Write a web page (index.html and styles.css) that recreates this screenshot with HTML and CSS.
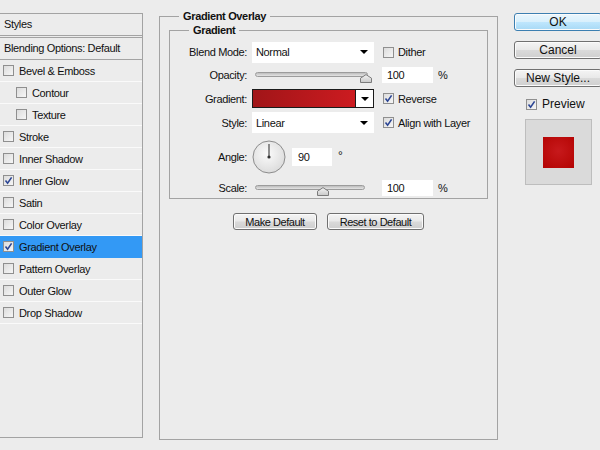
FILE: index.html
```html
<!DOCTYPE html>
<html>
<head>
<meta charset="utf-8">
<title>Layer Style - Gradient Overlay</title>
<link rel="stylesheet" href="styles.css">
</head>
<body>
<div class="dialog">
  <aside class="styles-panel">
    <div class="panel-head">Styles</div>
    <div class="panel-blend">Blending Options: Default</div>
    <ul class="fx-list">
      <li class="fx"><span class="cb"></span>Bevel &amp; Emboss</li>
      <li class="fx sub"><span class="cb"></span>Contour</li>
      <li class="fx sub"><span class="cb"></span>Texture</li>
      <li class="fx"><span class="cb"></span>Stroke</li>
      <li class="fx"><span class="cb"></span>Inner Shadow</li>
      <li class="fx"><span class="cb checked"><svg viewBox="0 0 11 11" width="11" height="11"><path d="M2.5 5.5 L4.6 8.2 L8.6 2.4" /></svg></span>Inner Glow</li>
      <li class="fx"><span class="cb"></span>Satin</li>
      <li class="fx"><span class="cb"></span>Color Overlay</li>
      <li class="fx selected"><span class="cb checked"><svg viewBox="0 0 11 11" width="11" height="11"><path d="M2.5 5.5 L4.6 8.2 L8.6 2.4" /></svg></span>Gradient Overlay</li>
      <li class="fx"><span class="cb"></span>Pattern Overlay</li>
      <li class="fx"><span class="cb"></span>Outer Glow</li>
      <li class="fx"><span class="cb"></span>Drop Shadow</li>
    </ul>
  </aside>

  <fieldset class="group outer">
    <legend>Gradient Overlay</legend>
    <fieldset class="group inner">
      <legend>Gradient</legend>
      <div class="grid">
        <label class="lbl">Blend Mode:</label>
        <div class="select"><span>Normal</span><i class="arrow"></i></div>
        <div class="opt"><span class="cb"></span>Dither</div>

        <label class="lbl">Opacity:</label>
        <div class="slider">
          <div class="track"></div>
          <svg class="thumb" style="left:105px" viewBox="0 0 12 9" width="12" height="9"><defs><linearGradient id="tg1" x1="0" y1="0" x2="0" y2="1"><stop offset="0" stop-color="#f4f4f4"/><stop offset="1" stop-color="#c9c9c9"/></linearGradient></defs><path d="M0.5 8.5 V4.2 L6 0.6 L11.5 4.2 V8.5 Z" fill="url(#tg1)" stroke="#7b7b7b"/></svg>
        </div>
        <div class="num-cell"><span class="num">100</span><span class="unit">%</span></div>

        <label class="lbl">Gradient:</label>
        <div class="swatch"><span class="ramp"></span><span class="swatch-btn"><i class="arrow"></i></span></div>
        <div class="opt"><span class="cb checked"><svg viewBox="0 0 11 11" width="11" height="11"><path d="M2.5 5.5 L4.6 8.2 L8.6 2.4" /></svg></span>Reverse</div>

        <label class="lbl">Style:</label>
        <div class="select"><span>Linear</span><i class="arrow"></i></div>
        <div class="opt"><span class="cb checked"><svg viewBox="0 0 11 11" width="11" height="11"><path d="M2.5 5.5 L4.6 8.2 L8.6 2.4" /></svg></span>Align with Layer</div>

        <label class="lbl">Angle:</label>
        <div class="angle">
          <svg class="dial" viewBox="0 0 34 34" width="34" height="34"><defs><radialGradient id="dg" cx="0.45" cy="0.4" r="0.6"><stop offset="0" stop-color="#fbfbfb"/><stop offset="1" stop-color="#dcdcdc"/></radialGradient></defs><circle cx="17" cy="17" r="16" fill="url(#dg)" stroke="#8c8c8c"/><line x1="17" y1="17" x2="17" y2="4" stroke="#4a4a4a" stroke-width="1.2"/><circle cx="17" cy="17" r="1.6" fill="#333"/></svg>
          <span class="num small">90</span>
          <span class="deg">°</span>
        </div>
        <div></div>

        <label class="lbl">Scale:</label>
        <div class="slider">
          <div class="track short"></div>
          <svg class="thumb" style="left:62px" viewBox="0 0 12 9" width="12" height="9"><defs><linearGradient id="tg2" x1="0" y1="0" x2="0" y2="1"><stop offset="0" stop-color="#f4f4f4"/><stop offset="1" stop-color="#c9c9c9"/></linearGradient></defs><path d="M0.5 8.5 V4.2 L6 0.6 L11.5 4.2 V8.5 Z" fill="url(#tg2)" stroke="#7b7b7b"/></svg>
        </div>
        <div class="num-cell"><span class="num">100</span><span class="unit">%</span></div>
      </div>
    </fieldset>
    <div class="defaults">
      <button class="btn mk">Make Default</button>
      <button class="btn rs">Reset to Default</button>
    </div>
  </fieldset>

  <div class="actions">
    <button class="btn big ok">OK</button>
    <button class="btn big">Cancel</button>
    <button class="btn big">New Style...</button>
    <div class="preview-opt"><span class="cb checked"><svg viewBox="0 0 11 11" width="11" height="11"><path d="M2.5 5.5 L4.6 8.2 L8.6 2.4" /></svg></span>Preview</div>
    <div class="preview-box"><span class="preview-square"></span></div>
  </div>
</div>
</body>
</html>
```
FILE: styles.css
```css
* { box-sizing: border-box; }

html, body {
  margin: 0;
  padding: 0;
  background: #ececec;
}

body {
  width: 600px;
  height: 450px;
  overflow: hidden;
  font-family: "Liberation Sans", Arial, sans-serif;
  font-size: 11px;
  letter-spacing: -0.35px;
  color: #111;
}

.dialog {
  display: flex;
  align-items: flex-start;
  width: 600px;
  height: 450px;
}

/* ---------- left styles list ---------- */
.styles-panel {
  width: 143px;
  flex: none;
  height: 425px;
  margin-top: 13px;
  border-top: 1px solid #a3a3a3;
  border-right: 1px solid #a3a3a3;
  border-bottom: 1px solid #a3a3a3;
}

.panel-head {
  height: 24px;
  padding-left: 4px;
  line-height: 21px;
  border-bottom: 3px double #a3a3a3;
}

.panel-blend {
  height: 22px;
  padding-left: 4px;
  line-height: 21px;
  border-bottom: 1px solid #a3a3a3;
}

.fx-list {
  list-style: none;
  margin: 0;
  padding: 0;
}

.fx {
  display: flex;
  align-items: center;
  gap: 5px;
  height: 22px;
  padding-left: 3px;
  border-bottom: 1px solid #fafafa;
}

.fx.sub { padding-left: 16px; }

.fx.selected {
  background: #3399f5;
  border-bottom-color: #3399f5;
}

/* ---------- checkbox ---------- */
.cb {
  display: inline-flex;
  flex: none;
  width: 11px;
  height: 11px;
  border: 1px solid #8f8f8f;
  background: linear-gradient(135deg, #dcdcdc, #f6f6f6);
  position: relative;
}

.cb svg {
  position: absolute;
  left: -1px;
  top: -1px;
}

.cb svg path {
  fill: none;
  stroke: #2b4594;
  stroke-width: 1.6;
}

/* ---------- group boxes ---------- */
.group {
  margin: 0;
  border: 1px solid #a3a3a3;
  min-width: 0;
}

.group legend {
  font-weight: bold;
  line-height: 13px;
  padding: 0 4px;
}

.outer {
  flex: none;
  width: 339px;
  height: 430px;
  margin-top: 10px;
  margin-left: 16px;
  padding: 1px 9px 0 9px;
}

.outer > legend { margin-left: 10px; }

.inner {
  padding: 4px 0 1px 0;
}

.inner > legend { margin-left: 19px; }

.grid {
  display: grid;
  grid-template-columns: 77px 122px 1fr;
  grid-template-rows: 22px 24px 23px 25px 44px 18px;
  column-gap: 5px;
  align-items: center;
}

.lbl {
  text-align: right;
}

.select {
  display: flex;
  align-items: center;
  justify-content: space-between;
  height: 21px;
  padding: 0 6px 0 4px;
  background: #fff;
}

.arrow {
  display: block;
  width: 0;
  height: 0;
  border-left: 4px solid transparent;
  border-right: 4px solid transparent;
  border-top: 4px solid #000;
}

.opt {
  display: flex;
  align-items: center;
  gap: 4px;
  padding-left: 4px;
}

.slider {
  position: relative;
  height: 14px;
  margin-left: 3px;
}

.track {
  margin-top: 4px;
  width: 113px;
  height: 5px;
  border: 1px solid #9c9c9c;
  border-radius: 3px;
  background: linear-gradient(#bdbdbd, #e4e4e4);
}

.track.short { width: 110px; }

.thumb {
  position: absolute;
  top: 6px;
}

.num-cell {
  display: flex;
  align-items: center;
  padding-left: 3px;
}

.num {
  display: inline-block;
  width: 51px;
  height: 16px;
  line-height: 16px;
  padding-left: 5px;
  background: #fff;
}

.num.small {
  width: 40px;
  height: 18px;
  line-height: 18px;
  padding-left: 6px;
}

.unit { margin-left: 5px; }

.swatch {
  display: flex;
  height: 19px;
  border: 1px solid #1a1a1a;
}

.ramp {
  flex: 1;
  background: linear-gradient(90deg, #a11518, #cc1b20);
  border-right: 1px solid #1a1a1a;
}

.swatch-btn {
  display: flex;
  align-items: center;
  justify-content: center;
  width: 17px;
  background: #fff;
}

.angle {
  display: flex;
  align-items: center;
}

.dial {
  margin-left: 0;
  margin-right: 6px;
}

.deg {
  align-self: flex-start;
  margin-top: 9px;
  margin-left: 6px;
  font-size: 12px;
}

/* ---------- buttons ---------- */
.btn {
  font-family: "Liberation Sans", Arial, sans-serif;
  font-size: 11px;
  letter-spacing: -0.45px;
  color: #111;
  height: 17px;
  padding: 0;
  border: 1px solid #707070;
  border-radius: 3px;
  background: linear-gradient(#f4f4f4 0%, #e9e9e9 48%, #dadada 52%, #cfcfcf 100%);
  box-shadow: inset 0 0 0 1px #fbfbfb;
}

.defaults {
  display: flex;
  justify-content: center;
  gap: 10px;
  margin-top: 14px;
}

.btn.mk { width: 84px; }
.btn.rs { width: 97px; }

.actions {
  flex: none;
  width: 88px;
  margin-left: 16px;
  margin-top: 13px;
  display: flex;
  flex-direction: column;
  align-items: flex-start;
}

.btn.big {
  width: 88px;
  height: 18px;
  font-size: 12px;
  letter-spacing: 0;
  margin-bottom: 10px;
}

.btn.ok {
  border-color: #3c7fb1;
  background: linear-gradient(#eaf6fd 0%, #d9f0fc 48%, #bee6fd 52%, #a7d9f5 100%);
}

.preview-opt {
  display: flex;
  align-items: center;
  gap: 5px;
  margin-left: 12px;
  font-size: 12px;
  letter-spacing: 0;
}

.preview-box {
  display: flex;
  align-items: center;
  justify-content: center;
  width: 67px;
  height: 66px;
  margin-top: 8px;
  margin-left: 11px;
  border: 1px solid #bdbdbd;
  background: #dadada;
}

.preview-square {
  display: block;
  width: 31px;
  height: 31px;
  background: radial-gradient(circle at 50% 45%, #c7191c 0%, #bb0c0c 60%, #b40202 100%);
}
```
